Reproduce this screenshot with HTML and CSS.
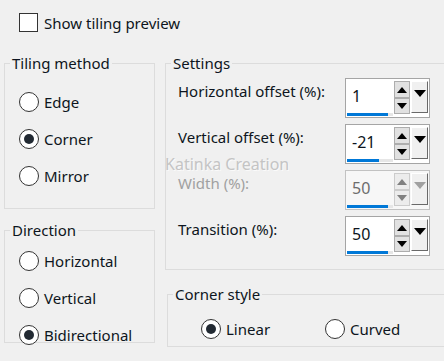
FILE: index.html
```html
<!DOCTYPE html>
<html lang="en">
<head>
    <meta charset="UTF-8">
    <title>Tiling</title>
    <link rel="stylesheet" href="styles.css">
</head>
<body>
    <div class="top">
        <label class="check"><span class="box"></span>Show tiling preview</label>
    </div>

    <div class="main">
        <div class="left">
            <fieldset class="group tiling">
                <legend>Tiling method</legend>
                <div class="items">
                    <div class="radio"><span class="dot"></span>Edge</div>
                    <div class="radio"><span class="dot on"></span>Corner</div>
                    <div class="radio"><span class="dot"></span>Mirror</div>
                </div>
            </fieldset>
            <fieldset class="group direction">
                <legend>Direction</legend>
                <div class="items">
                    <div class="radio"><span class="dot"></span>Horizontal</div>
                    <div class="radio"><span class="dot"></span>Vertical</div>
                    <div class="radio"><span class="dot on"></span>Bidirectional</div>
                </div>
            </fieldset>
        </div>

        <div class="right">
            <fieldset class="group settings">
                <legend>Settings</legend>
                <div class="rows">
                    <div class="row">
                        <span class="label">Horizontal offset (%):</span>
                        <div class="spin">
                            <div class="field"><span class="value">1</span><span class="track"><span class="fill" style="width:41px"></span></span></div>
                            <div class="arrows"><span class="btn up"></span><span class="btn down"></span></div>
                            <span class="drop"></span>
                        </div>
                    </div>
                    <div class="row">
                        <span class="label">Vertical offset (%):</span>
                        <div class="spin">
                            <div class="field"><span class="value">-21</span><span class="track"><span class="fill" style="width:32px"></span></span></div>
                            <div class="arrows"><span class="btn up"></span><span class="btn down"></span></div>
                            <span class="drop"></span>
                        </div>
                    </div>
                    <div class="row disabled">
                        <span class="label">Width (%):</span>
                        <div class="spin">
                            <div class="field"><span class="value">50</span><span class="track"><span class="fill" style="width:41px"></span></span></div>
                            <div class="arrows"><span class="btn up"></span><span class="btn down"></span></div>
                            <span class="drop"></span>
                        </div>
                    </div>
                    <div class="row">
                        <span class="label">Transition (%):</span>
                        <div class="spin">
                            <div class="field"><span class="value">50</span><span class="track"><span class="fill" style="width:41px"></span></span></div>
                            <div class="arrows"><span class="btn up"></span><span class="btn down"></span></div>
                            <span class="drop"></span>
                        </div>
                    </div>
                </div>
            </fieldset>
            <fieldset class="group corner">
                <legend>Corner style</legend>
                <div class="inline">
                    <div class="radio"><span class="dot on"></span>Linear</div>
                    <div class="radio"><span class="dot"></span>Curved</div>
                </div>
            </fieldset>
        </div>
    </div>

    <div class="watermark">Katinka Creation</div>
</body>
</html>
```

FILE: styles.css
```css
body {
    margin: 0;
    width: 444px;
    height: 361px;
    overflow: hidden;
    position: relative;
    background: #f0f0f0;
    font-family: "Noto Sans", sans-serif;
    font-size: 15px;
    line-height: 18px;
    color: #0d1520;
}
.top {
    padding: 13px 0 0 19px;
}
.check {
    display: flex;
    align-items: center;
    gap: 6px;
    height: 19px;
}
.check .box {
    width: 19px;
    height: 19px;
    box-sizing: border-box;
    border: 1px solid #333;
    background: #fff;
}
.main {
    display: flex;
    margin-top: 22px;
    padding-left: 4px;
}
.left {
    flex-shrink: 0;
    width: 151px;
}
.right {
    flex-shrink: 0;
    margin-left: 10px;
    width: 300px;
}
.group {
    margin: 0;
    padding: 0;
    border: 1px solid #dcdcdc;
    min-width: 0;
}
.group legend {
    margin-left: 5px;
    padding: 0 2px;
    line-height: 18px;
}
.items {
    padding-left: 14px;
}
.tiling .items {
    padding-top: 11px;
    padding-bottom: 14px;
}
.direction {
    margin-top: 12px;
    height: 120px;
}
.direction .items {
    padding-top: 3px;
}
.radio {
    display: flex;
    align-items: center;
    gap: 5px;
    height: 37px;
}
.dot {
    width: 20px;
    height: 20px;
    box-sizing: border-box;
    border: 1px solid #333;
    border-radius: 50%;
    background: #fff;
    display: flex;
    align-items: center;
    justify-content: center;
}
.dot.on::after {
    content: "";
    width: 10px;
    height: 10px;
    border-radius: 50%;
    background: #222a33;
}
.rows {
    padding: 6px 0 13px 12px;
    display: flex;
    flex-direction: column;
    gap: 6px;
}
.row {
    display: grid;
    grid-template-columns: 167px 85px;
    height: 40px;
}
.label {
    align-self: start;
    margin-top: 4px;
}
.spin {
    display: flex;
    width: 85px;
    height: 40px;
    box-sizing: border-box;
    border: 1px solid #a5a5a5;
    background: #fff;
    padding: 0 1px 1px 0;
}
.field {
    width: 48px;
    display: flex;
    flex-direction: column;
}
.value {
    font-size: 16px;
    line-height: 34px;
    padding-left: 6px;
    height: 34px;
}
.track {
    margin-left: 1px;
    width: 46px;
    height: 3px;
    background: #e6e6e6;
}
.fill {
    display: block;
    height: 3px;
    background: #0078d7;
}
.arrows {
    margin: 2px 0 0 1px;
    width: 16px;
    display: flex;
    flex-direction: column;
}
.btn {
    height: 16px;
    box-sizing: border-box;
    border: 1px solid #adadad;
    background: #e1e1e1;
    display: flex;
    align-items: center;
    justify-content: center;
}
.btn.up {
    height: 17px;
}
.btn.up::after {
    content: "";
    border-left: 5px solid transparent;
    border-right: 5px solid transparent;
    border-bottom: 6px solid #000;
}
.btn.down::after {
    content: "";
    border-left: 5px solid transparent;
    border-right: 5px solid transparent;
    border-top: 6px solid #000;
}
.drop {
    margin: 2px 0 0 1px;
    width: 17px;
    height: 32px;
    box-sizing: border-box;
    border: 1px solid #fff;
    border-right-color: #696969;
    border-bottom-color: #696969;
    background: #f0f0f0;
    display: flex;
    justify-content: center;
    padding-top: 8px;
}
.drop::after {
    content: "";
    border-left: 6px solid transparent;
    border-right: 6px solid transparent;
    border-top: 7px solid #000;
    height: 0;
}
.disabled .label {
    color: #a0a0a0;
}
.disabled .spin {
    background: #f7f7f7;
    border-color: #c2c2c2;
}
.disabled .value {
    color: #6d6d6d;
}
.disabled .btn {
    background: #ececec;
    border-color: #cccccc;
}
.disabled .btn.up::after {
    border-bottom-color: #808080;
}
.disabled .btn.down::after {
    border-top-color: #808080;
}
.disabled .drop::after {
    border-top-color: #a0a0a0;
}
.corner {
    margin: 15px 0 0 2px;
    height: 60px;
}
.inline {
    display: flex;
    padding: 7px 0 0 33px;
}
.inline .radio {
    width: 124px;
}
.watermark {
    position: absolute;
    left: 165px;
    top: 157px;
    font-size: 16px;
    line-height: 14px;
    color: #c4c4c4;
    text-shadow: 1px 1px 0 #fafafa;
}
```
